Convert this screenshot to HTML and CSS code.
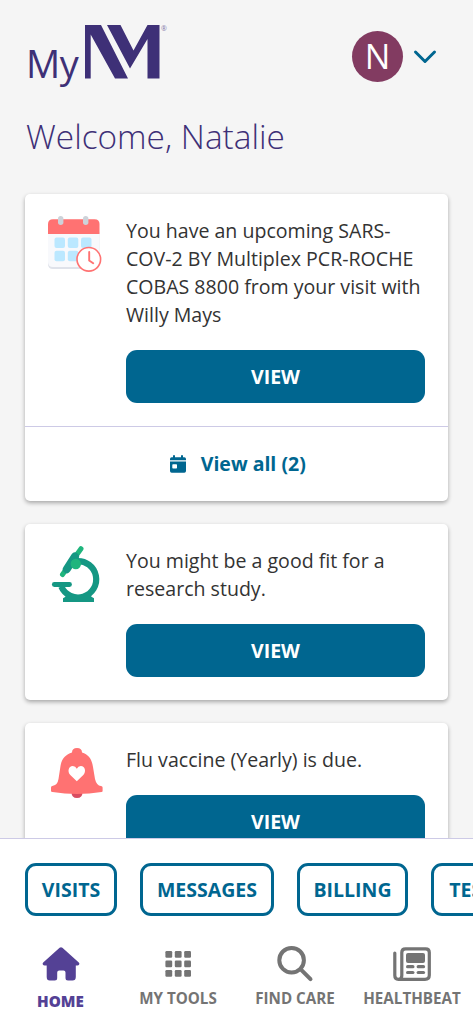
FILE: index.html
```html
<!DOCTYPE html>
<html lang="en">
<head>
<meta charset="utf-8">
<title>MyNM</title>
<link rel="stylesheet" href="styles.css">
</head>
<body>
<div class="app">
  <main class="feed">
    <header class="header">
      <div class="logo">
        <span class="logo-my">My</span>
        <svg class="logo-mark" width="75" height="54" viewBox="0 0 75 54" fill="#3e3077"><path d="M0 0H16L43 53.500H30L5.700 9.500V53.500H0Z"/><path d="M22 0H35.500L48.500 25.500L62.500 0H74.500V53.500H62.500V14L45 43.500Z"/></svg>
        <span class="reg">®</span>
      </div>
      <div class="account">
        <span class="avatar">N</span>
        <svg width="24" height="16" viewBox="0 0 24 16" fill="none" stroke="#006690" stroke-width="3" stroke-linecap="round" stroke-linejoin="round"><path d="M2.500 3L12 12.500L21.500 3"/></svg>
      </div>
    </header>
    <h1 class="welcome">Welcome, Natalie</h1>

    <section class="card">
      <div class="card-body">
        <svg class="card-icon" width="56" height="60" viewBox="47 214 56 60">
          <path d="M48 232H99.500V264Q99.500 269 94.500 269H53Q48 269 48 264Z" fill="#dfe2ea"/>
          <path d="M48 232H99.500V262Q99.500 267 94.500 267H53Q48 267 48 262Z" fill="#f8f9fc"/>
          <path d="M48 234V224Q48 219.300 53 219.300H94.500Q99.500 219.300 99.500 224V234Z" fill="#ff7272"/>
          <g fill="#cdd2d9"><rect x="58" y="216" width="5.400" height="9" rx="2.700"/><rect x="83" y="216" width="5.400" height="9" rx="2.700"/></g>
          <g fill="#bbe8ff"><rect x="54.500" y="237.500" width="10.500" height="10.500" rx="2"/><rect x="67.800" y="237.500" width="10.500" height="10.500" rx="2"/><rect x="81" y="237.500" width="10.500" height="10.500" rx="2"/><rect x="54.500" y="250.700" width="10.500" height="10.500" rx="2"/><rect x="67.800" y="250.700" width="10.500" height="10.500" rx="2"/></g>
          <circle cx="88.800" cy="259.300" r="11.800" fill="#fff" stroke="#ff7272" stroke-width="1.600"/>
          <path d="M89.200 252V260.500L93.200 263.300" fill="none" stroke="#ff7272" stroke-width="1.900" stroke-linecap="round"/>
        </svg>
        <div class="card-content">
          <p>You have an upcoming SARS-<br>COV-2 BY Multiplex PCR-ROCHE<br>COBAS 8800 from your visit with<br>Willy Mays</p>
          <button class="view">VIEW</button>
        </div>
      </div>
      <a class="view-all">
        <svg width="16" height="18" viewBox="0 0 16 18" fill="#006690"><path d="M0 5.300V4Q0 2.300 1.700 2.300H3V1Q3 0 4 0T5 1V2.300H11V1Q11 0 12 0T13 1V2.300H14.300Q16 2.300 16 4V5.300Z"/><path fill-rule="evenodd" d="M0 6.500H16V16Q16 17.700 14.300 17.700H1.700Q0 17.700 0 16ZM3 9.200Q2.300 9.200 2.300 9.900V12.800Q2.300 13.500 3 13.500H6.300Q7 13.500 7 12.800V9.900Q7 9.200 6.300 9.200Z"/></svg>
        <span>View all (2)</span>
      </a>
    </section>

    <section class="card">
      <div class="card-body">
        <svg class="card-icon" width="56" height="60" viewBox="47 544 56 60">
          <path d="M76.500 561.200A18.200 18.200 0 1 1 61.300 586.500" fill="none" stroke="#159783" stroke-width="6.200"/>
          <path d="M54.300 584.500H69.500" stroke="#159783" stroke-width="4.800" stroke-linecap="round"/>
          <path d="M63 602V598.500Q63 597.700 64 597.700L67 595.500H90L93 597.700Q94 597.700 94 598.500V602Z" fill="#159783"/>
          <path d="M81 548.700L62.500 574.500" stroke="#1fb57d" stroke-width="5" stroke-linecap="round"/>
          <path d="M75 556.500L66.800 569.200" stroke="#159783" stroke-width="8" stroke-linecap="round"/>
          <circle cx="75.800" cy="564" r="5.200" fill="#1fb57d"/>
        </svg>
        <div class="card-content">
          <p>You might be a good fit for a<br>research study.</p>
          <button class="view">VIEW</button>
        </div>
      </div>
    </section>

    <section class="card">
      <div class="card-body">
        <svg class="card-icon" width="56" height="60" viewBox="47 743 56 60">
          <path d="M71.500 792H82.500Q82.500 798 77 798T71.500 792Z" fill="#d94c60"/>
          <path d="M72 752.500Q72 748 77 748T82 752.500C89 754.500 92 760 93 767L95 779Q96.500 785.500 101 786Q102.600 786.200 102.600 787.500V791Q102.600 792 101.500 792Q77 796 52.500 792Q51 792 51 791V787.500Q51 786 53 785.800Q57.500 785 58.500 779L60.500 766C61.500 759 65.500 754.500 72 752.500Z" fill="#ff7272"/>
          <path d="M76.800 781.300L70.300 775C67.200 772 68.300 766 72.800 766Q75.500 766 76.800 768.800Q78.100 766 80.800 766C85.300 766 86.400 772 83.300 775Z" fill="#fff"/>
        </svg>
        <div class="card-content">
          <p>Flu vaccine (Yearly) is due.</p>
          <button class="view">VIEW</button>
        </div>
      </div>
    </section>
  </main>

  <footer class="dock">
    <div class="shortcuts">
      <button class="pill w-visits">VISITS</button>
      <button class="pill w-messages">MESSAGES</button>
      <button class="pill w-billing">BILLING</button>
      <button class="pill w-tests">TEST RESULTS</button>
    </div>
    <nav class="tabs">
      <a class="tab active">
        <svg width="40" height="40" viewBox="0 0 40 40" fill="#544195"><path d="M18.600 3.800Q20 2.600 21.400 3.800L37.800 18.400Q39 19.600 38 20.800Q37.500 21.400 36.500 21.400H34.800V33Q34.800 36.500 31.500 36.500H27Q24.500 36.500 24.500 34V28.500Q24.500 26.500 22.500 26.500H18.200Q16.200 26.500 16.200 28.500V34Q16.200 36.500 13.700 36.500H8.800Q5.700 36.500 5.700 33V21.400H3.500Q2.500 21.400 2 20.800Q1 19.600 2.200 18.400Z"/></svg>
        <span>HOME</span>
      </a>
      <a class="tab">
        <svg width="40" height="40" viewBox="0 0 40 40" fill="#747474"><g id="r"><rect x="7.400" y="7" width="6.800" height="6.800" rx="1.200"/><rect x="16.800" y="7" width="6.800" height="6.800" rx="1.200"/><rect x="26.200" y="7" width="6.800" height="6.800" rx="1.200"/></g><use href="#r" y="9.500"/><use href="#r" y="19"/></svg>
        <span>MY TOOLS</span>
      </a>
      <a class="tab">
        <svg width="40" height="40" viewBox="0 0 40 40" fill="none" stroke="#747474" stroke-width="4" stroke-linecap="round"><circle cx="16.600" cy="16.200" r="12.300"/><path d="M25.500 25.200L35.500 35.200"/></svg>
        <span>FIND CARE</span>
      </a>
      <a class="tab">
        <svg width="40" height="40" viewBox="0 0 40 40" fill="none" stroke="#747474" stroke-width="3.200" stroke-linecap="round"><path d="M2.800 9V31.500Q2.800 35.300 6.400 35.300H33Q37.300 35.300 37.300 31.300V8.500Q37.300 4.800 33.600 4.800H13.500Q9.800 4.800 9.800 8.500V31.500Q9.800 35.300 6.400 35.300"/><g fill="#747474" stroke="none"><rect x="14" y="9" width="19" height="10" rx="2"/><rect x="14" y="21.100" width="8.500" height="3.200" rx="1.600"/><rect x="24.600" y="21.100" width="8.500" height="3.200" rx="1.600"/><rect x="14" y="26.900" width="8.500" height="3.200" rx="1.600"/><rect x="24.600" y="26.900" width="8.500" height="3.200" rx="1.600"/></g></svg>
        <span>HEALTHBEAT</span>
      </a>
    </nav>
  </footer>
</div>
</body>
</html>
```
FILE: styles.css
```css
* { box-sizing: border-box; }
body { margin: 0; font-family: "Open Sans", "Noto Sans", sans-serif; }
button { font: inherit; }
.app { width: 473px; height: 1024px; display: flex; flex-direction: column; overflow: hidden; background: #f5f5f5; }
.feed { flex: 1; min-height: 0; overflow: hidden; padding: 0 25.500px 0 25px; }
.header { height: 111px; display: flex; justify-content: space-between; align-items: flex-start; padding: 25px 10.500px 0 1px; }
.logo { display: flex; align-items: flex-start; color: #3e3077; }
.logo-my { font-size: 38px; line-height: 54px; width: 55px; padding: 11px 0 0 0; margin-right: 4px; letter-spacing: -.5px; }
.logo-mark { display: block; }
.reg { font-size: 7px; line-height: 7px; margin-left: 1px; color: #8379a8; }
.account { display: flex; align-items: center; gap: 10px; padding-top: 6px; }
.avatar { width: 51px; height: 51px; border-radius: 50%; background: #823b61; color: #fff; font-size: 34px; line-height: 51px; text-align: center; }
.welcome { margin: 0 0 32px; height: 50.500px; padding-left: 1px; font-size: 33.400px; line-height: 50px; font-weight: 300; color: #3e3077; white-space: nowrap; }
.card { background: #fff; border-radius: 5px; margin-bottom: 23px; box-shadow: 0 2px 4px rgba(0,0,0,.32); }
.card-body { display: flex; gap: 23px; padding: 22px 22.500px 23px 22px; }
.card-icon { flex: none; display: block; margin-top: -2px; }
.card-content { flex: 1; min-width: 0; }
.card p { margin: 0; padding: 1px 0 21px; font-size: 19.570px; line-height: 28px; color: #333; white-space: nowrap; }
.view { display: block; width: 299px; height: 53px; padding: 0; border: 0; border-radius: 11px; background: #006690; color: #fff; font-size: 19.500px; font-weight: 700; }
.view-all { display: flex; align-items: center; justify-content: center; gap: 15px; height: 75px; padding-left: 3px; border-top: 1.500px solid #cdcae6; color: #006690; font-size: 19.500px; font-weight: 700; }
.dock { flex: none; height: 186px; background: #fff; border-top: 1.500px solid #cdcae6; }
.shortcuts { display: flex; gap: 23px; padding: 24px 0 0 25px; overflow: hidden; }
.pill { flex: none; height: 53px; padding: 0; border: 3px solid #006690; border-radius: 11px; background: #fff; color: #006690; font-size: 19.500px; font-weight: 700; white-space: nowrap; }
.w-visits { width: 92px; }
.w-messages { width: 134px; }
.w-billing { width: 111px; }
.w-tests { width: 168px; }
.tabs { display: grid; grid-template-columns: repeat(4, 117px); margin-top: 28px; padding-left: 2px; }
.tab { display: flex; flex-direction: column; align-items: center; color: #747474; font-size: 15.200px; line-height: 22px; font-weight: 700; white-space: nowrap; }
.tab span { margin-top: 3px; padding-left: 1px; }
.active { color: #544195; }
.active span { margin-top: 6px; padding-left: 0; font-weight: 800; }
```
